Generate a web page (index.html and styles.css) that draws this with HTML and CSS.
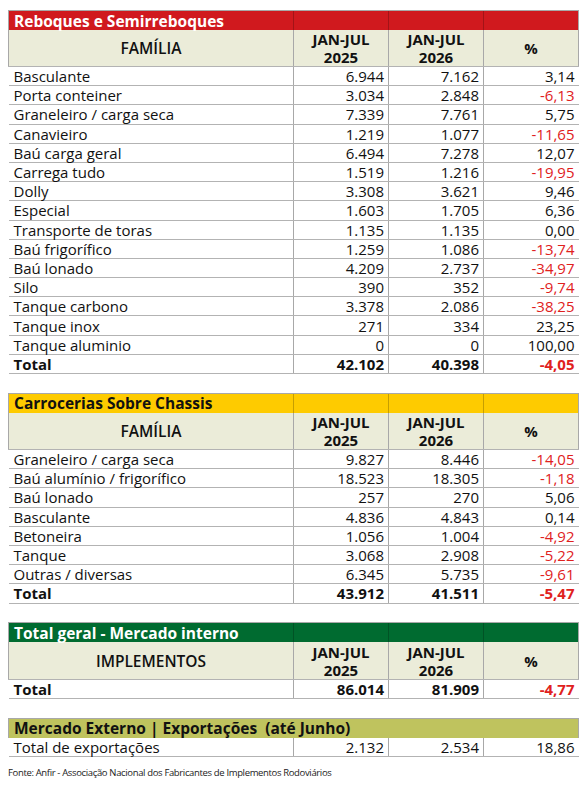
FILE: index.html
```html
<!DOCTYPE html>
<html lang="pt">
<head>
<meta charset="utf-8">
<link rel="stylesheet" href="styles.css">
</head>
<body>
<div class="page">
  <table class="tbl">
    <colgroup><col class="c1"><col class="cn"><col class="cn"><col class="cn"></colgroup>
    <tr class="title red"><td>Reboques e Semirreboques</td><td></td><td></td><td></td></tr>
    <tr class="head"><td>FAMÍLIA</td><td class="b">JAN-JUL<br>2025</td><td class="b">JAN-JUL<br>2026</td><td class="b">%</td></tr>
    <tr><td>Basculante</td><td>6.944</td><td>7.162</td><td>3,14</td></tr>
    <tr><td>Porta conteiner</td><td>3.034</td><td>2.848</td><td class="neg">-6,13</td></tr>
    <tr><td>Graneleiro / carga seca</td><td>7.339</td><td>7.761</td><td>5,75</td></tr>
    <tr><td>Canavieiro</td><td>1.219</td><td>1.077</td><td class="neg">-11,65</td></tr>
    <tr><td>Baú carga geral</td><td>6.494</td><td>7.278</td><td>12,07</td></tr>
    <tr><td>Carrega tudo</td><td>1.519</td><td>1.216</td><td class="neg">-19,95</td></tr>
    <tr><td>Dolly</td><td>3.308</td><td>3.621</td><td>9,46</td></tr>
    <tr><td>Especial</td><td>1.603</td><td>1.705</td><td>6,36</td></tr>
    <tr><td>Transporte de toras</td><td>1.135</td><td>1.135</td><td>0,00</td></tr>
    <tr><td>Baú frigorífico</td><td>1.259</td><td>1.086</td><td class="neg">-13,74</td></tr>
    <tr><td>Baú lonado</td><td>4.209</td><td>2.737</td><td class="neg">-34,97</td></tr>
    <tr><td>Silo</td><td>390</td><td>352</td><td class="neg">-9,74</td></tr>
    <tr><td>Tanque carbono</td><td>3.378</td><td>2.086</td><td class="neg">-38,25</td></tr>
    <tr><td>Tanque inox</td><td>271</td><td>334</td><td>23,25</td></tr>
    <tr><td>Tanque aluminio</td><td>0</td><td>0</td><td>100,00</td></tr>
    <tr class="total"><td>Total</td><td>42.102</td><td>40.398</td><td class="neg">-4,05</td></tr>
  </table>

  <table class="tbl">
    <colgroup><col class="c1"><col class="cn"><col class="cn"><col class="cn"></colgroup>
    <tr class="title yellow"><td>Carrocerias Sobre Chassis</td><td></td><td></td><td></td></tr>
    <tr class="head head-m"><td>FAMÍLIA</td><td class="b">JAN-JUL<br>2025</td><td class="b">JAN-JUL<br>2026</td><td class="b">%</td></tr>
    <tr><td>Graneleiro / carga seca</td><td>9.827</td><td>8.446</td><td class="neg">-14,05</td></tr>
    <tr><td>Baú alumínio / frigorífico</td><td>18.523</td><td>18.305</td><td class="neg">-1,18</td></tr>
    <tr><td>Baú lonado</td><td>257</td><td>270</td><td>5,06</td></tr>
    <tr><td>Basculante</td><td>4.836</td><td>4.843</td><td>0,14</td></tr>
    <tr><td>Betoneira</td><td>1.056</td><td>1.004</td><td class="neg">-4,92</td></tr>
    <tr><td>Tanque</td><td>3.068</td><td>2.908</td><td class="neg">-5,22</td></tr>
    <tr><td>Outras / diversas</td><td>6.345</td><td>5.735</td><td class="neg">-9,61</td></tr>
    <tr class="total"><td>Total</td><td>43.912</td><td>41.511</td><td class="neg">-5,47</td></tr>
  </table>

  <table class="tbl">
    <colgroup><col class="c1"><col class="cn"><col class="cn"><col class="cn"></colgroup>
    <tr class="title green"><td>Total geral - Mercado interno</td><td></td><td></td><td></td></tr>
    <tr class="head head-l"><td>IMPLEMENTOS</td><td class="b">JAN-JUL<br>2025</td><td class="b">JAN-JUL<br>2026</td><td class="b">%</td></tr>
    <tr class="total"><td>Total</td><td>86.014</td><td>81.909</td><td class="neg">-4,77</td></tr>
  </table>

  <table class="tbl">
    <colgroup><col class="c1"><col class="cn"><col class="cn"><col class="cn"></colgroup>
    <tr class="title olive"><td colspan="4">Mercado Externo | Exportações&nbsp; (até Junho)</td></tr>
    <tr><td>Total de exportações</td><td>2.132</td><td>2.534</td><td>18,86</td></tr>
  </table>

  <p class="source">Fonte: Anfir - Associação Nacional dos Fabricantes de Implementos Rodoviários</p>
</div>
</body>
</html>
```

FILE: styles.css
```css
html, body {
  margin: 0;
  padding: 0;
  background: #ffffff;
}

.page {
  padding: 10px 10px 0 8px;
  font-family: "Open Sans", "Liberation Sans", sans-serif;
  color: #111111;
  width: 570px;
}

.tbl {
  width: 570px;
  border-collapse: collapse;
  table-layout: fixed;
  margin-bottom: 18.5px;
  font-size: 15px;
  line-height: 18px;
}

.tbl:last-of-type {
  margin-bottom: 0;
}

.c1 { width: 285px; }
.cn { width: 95px; }

.tbl td {
  padding: 0 4px 0 5px;
  border-bottom: 1px solid #b3b3b3;
  text-align: right;
  white-space: nowrap;
}

.tbl td + td {
  border-left: 1px solid #a8a8a8;
}

.tbl td:first-child {
  text-align: left;
}

.tbl tr {
  height: 19.2px;
}

.tbl .title {
  height: 19.5px;
}

.tbl .title td {
  font-size: 15.5px;
  font-weight: 700;
  border-top: 1px solid #a8a8a8;
  border-bottom: none;
  padding-top: 0;
}

.tbl .title td + td {
  border-left: 1px solid rgba(0, 0, 0, 0.22);
}

.tbl .title td:first-child { border-left: 1px solid #a8a8a8; }
.tbl .title td:last-child { border-right: 1px solid #a8a8a8; }

.red td { background: #d0191e; color: #ffffff; }
.yellow td { background: #fecb00; color: #111111; }
.green td { background: #006b30; color: #ffffff; }
.olive td { background: #bfc35e; color: #111111; }

.tbl .head {
  height: 35.5px;
}

.tbl .head.head-m {
  height: 37px;
}

.tbl .head.head-l {
  height: 37.5px;
}

.tbl .head td {
  background: #ebecd9;
  text-align: center;
  line-height: 18px;
  padding: 0;
}

.tbl .head td:first-child {
  text-align: center;
  font-size: 15.5px;
  font-weight: 600;
  border-left: 1px solid #a8a8a8;
}

.tbl .head td:last-child {
  border-right: 1px solid #a8a8a8;
}

.tbl .head td.b {
  font-weight: 700;
}

.tbl .total td {
  font-weight: 700;
}

.neg {
  color: #e0211d;
}

.source {
  margin: 9px 0 0 0;
  font-size: 9.5px;
  line-height: 14px;
  letter-spacing: -0.35px;
  color: #222222;
}
```
